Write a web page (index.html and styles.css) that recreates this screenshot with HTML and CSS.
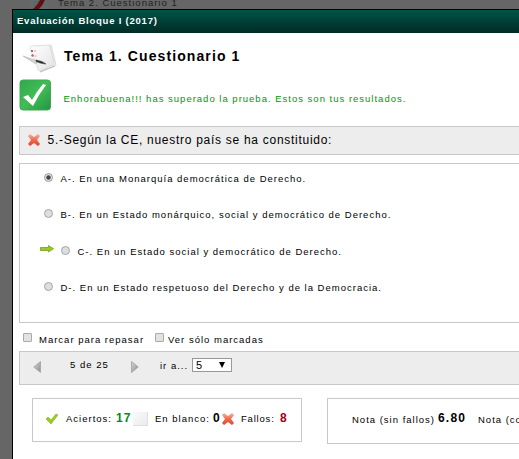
FILE: index.html
```html
<!DOCTYPE html>
<html lang="es">
<head>
<meta charset="utf-8">
<title>Evaluación Bloque I (2017)</title>
<link rel="stylesheet" href="styles.css">
</head>
<body>
<svg class="defs" width="0" height="0" aria-hidden="true">
  <defs>
    <linearGradient id="red" x2="0" y2="1"><stop stop-color="#f6b5a2"/><stop offset=".5" stop-color="#ee6a4d"/><stop offset="1" stop-color="#e5442b"/></linearGradient>
    <linearGradient id="green" x2="1" y2="1"><stop stop-color="#2fa84c"/><stop offset=".5" stop-color="#42bd55"/><stop offset="1" stop-color="#259343"/></linearGradient>
    <linearGradient id="grey" x2="1" y2="1"><stop stop-color="#d8d8d8"/><stop offset="1" stop-color="#8b8b8b"/></linearGradient>
    <linearGradient id="paper" x2="1" y2="1"><stop stop-color="#fff"/><stop offset="1" stop-color="#e4e4e4"/></linearGradient>
  </defs>
  <symbol id="cross" viewBox="0 0 14 14"><path d="M1 3 3 1l4 3 4-3 2 2-3 4 3 4-2 2-4-3-4 3-2-2 3-4z" fill="url(#red)"/></symbol>
</svg>
<div class="behind">
  <svg class="behind-icon" width="28" height="9" viewBox="0 0 28 9"><path d="M3 0h17v9H3z" fill="#626b6c"/><path d="M6 2h8M6 5h6" stroke="#566264"/><path d="M13 0h5q-2 5-6 9H6q4-3 7-9z" fill="#650f12"/></svg>
  <span>Tema 2. Cuestionario 1</span>
</div>
<main class="dialog">
  <header class="bar"><span>Evaluación Bloque I (2017)</span></header>
  <div class="title">
    <svg width="36" height="30" viewBox="0 0 36 30"><path d="m15 3 14-2 5 20-14 6z" fill="#f0f0f0" stroke="#ccc" stroke-width=".7"/><path d="M8 4q0-2 2-2l16-1q2 0 2 2l4 16q0 2-2 2l-12 6q-2 0-2-2z" fill="url(#paper)" stroke="#d4d4d4" stroke-width=".7"/><path d="m18 28 15-6" stroke="#bbb"/><path d="M9 7h2M9.500 12l2-1" fill="none" stroke="#c45c60" stroke-width="2"/><path d="M12 7.500l2-1M12.500 12h2" stroke="#dba3a3"/><path d="m1 12 15 5-2 3L4 14z" fill="#d5d5d5" stroke="#aaa" stroke-width=".5"/><path d="m14 16 6 1.500 4 2.500-5-.7-5-1.800z" fill="#333" stroke="#333" stroke-width=".5"/></svg>
    <h1>Tema 1. Cuestionario 1</h1>
  </div>
  <div class="message">
    <svg width="32" height="32" viewBox="0 0 32 32"><rect x="1" y="1" width="30.500" height="30" rx="3" fill="url(#green)" stroke="#44a65a"/><path d="m4 18 5-2 4 5q5-9 11-16l3 1Q20 15 14 27z" fill="#fff"/></svg>
    <p>Enhorabuena!!! has superado la prueba. Estos son tus resultados.</p>
  </div>
  <section class="question"><svg width="14" height="14"><use href="#cross"/></svg><h2>5.-Según la CE, nuestro país se ha constituido:</h2></section>
  <section class="answers">
    <label class="answer"><i class="radio on"></i><span>A-. En una Monarquía democrática de Derecho.</span></label>
    <label class="answer"><i class="radio"></i><span>B-. En un Estado monárquico, social y democrático de Derecho.</span></label>
    <label class="answer correct"><svg width="14" height="8" viewBox="0 0 14 8"><path d="M.5 2.500h8v-2l5 3.200-5 3.300V5.500h-8z" fill="#9bc824" stroke="#6fa31c" stroke-width=".8"/></svg><i class="radio"></i><span>C-. En un Estado social y democrático de Derecho.</span></label>
    <label class="answer"><i class="radio"></i><span>D-. En un Estado respetuoso del Derecho y de la Democracia.</span></label>
  </section>
  <div class="marks"><i class="check"></i><span class="review">Marcar para repasar</span><i class="check"></i><span class="marked">Ver sólo marcadas</span></div>
  <nav class="pager">
    <svg class="prev" width="9" height="14" viewBox="0 0 9 14"><path d="M7.500 1.500v11L.8 7z" fill="url(#grey)" stroke="#aaa"/></svg>
    <span class="count">5 de 25</span>
    <svg class="next" width="9" height="14" viewBox="0 0 9 14"><path d="M1.500 1.500v11L8.200 7z" fill="url(#grey)" stroke="#aaa"/></svg>
    <span class="goto">ir a...</span>
    <span class="select"><span>5</span><svg width="6" height="6" viewBox="0 0 6 6"><path d="M0 0h6L3 6z"/></svg></span>
  </nav>
  <div class="results">
    <section class="score">
      <svg class="tick" width="14" height="12" viewBox="0 0 14 12"><path d="m1 6 2-2 3 3 5-6 2 1-7 9z" fill="#9acb1f" stroke="#83b51c" stroke-width=".6"/></svg>
      <span class="hits">Aciertos:</span><b class="good">17</b>
      <i class="blank"></i><span class="blanks">En blanco:</span><b class="zero">0</b>
      <svg width="14" height="14"><use href="#cross"/></svg><span class="misses">Fallos:</span><b class="bad">8</b>
    </section>
    <section class="grade"><span class="plain">Nota (sin fallos)</span><b>6.80</b><span class="second">Nota (con fallos)</span></section>
  </div>
</main>
</body>
</html>
```
FILE: styles.css
```css
* { box-sizing: border-box; }
body { margin: 0; height: 459px; overflow: hidden; background: #666; color: #000; font: 9.5px/12px "Liberation Sans", Arial, sans-serif; letter-spacing: 1px; }
h1, h2, p { margin: 0; white-space: nowrap; }
span, b { white-space: nowrap; }
svg, i { display: block; flex: none; }
.defs { position: absolute; }
.behind { display: flex; height: 9px; padding-left: 27px; color: #222; }
.behind span { margin: -3px 0 0 3px; }
.dialog { position: absolute; left: 12px; top: 9px; right: 0; height: 450px; overflow: hidden; border: solid #000; border-width: 1px 0 0 1px; background: #fff; }
.bar { height: 23px; padding: 5px 4px; background: linear-gradient(#005448, #002b26); color: #fff; font-weight: bold; letter-spacing: .78px; }
.title { display: flex; height: 44px; padding: 11px 0 0 9px; }
.title h1 { margin: 4px 0 0 6px; font-size: 14px; line-height: 16px; letter-spacing: 1.1px; }
.message { display: flex; height: 49px; padding: 2px 0 0 6px; }
.message p { margin: 14px 0 0 12.5px; color: #090; }
.question, .answers, .pager { margin-left: 6px; border: 1px solid #c8c8c8; border-right: 0; }
.question { display: flex; align-items: center; height: 29px; padding-left: 7px; background: #ededed; }
.question svg { margin-top: -1px; }
.question h2 { margin: -2px 0 0 6.5px; font-size: 12px; line-height: 14px; font-weight: normal; letter-spacing: .72px; }
.answers { height: 160px; margin-top: 8px; padding-left: 24px; }
.answer { display: flex; align-items: flex-start; height: 36px; padding-top: 9px; }
.answer span { margin: 0 0 0 7.5px; }
.radio { width: 9px; height: 9px; border: 1px solid #a5a5a5; border-radius: 50%; background: #dedede; }
.on { border-color: #999; background: radial-gradient(circle, #444 0 1.8px, #e5e5e5 2.6px); }
.correct { height: 37px; margin-left: -4px; padding-top: 10px; }
.correct svg { margin: -1px 7px 0 0; }
.marks { display: flex; height: 28px; padding: 10px 0 0 10px; }
.check { width: 9px; height: 9px; border: 1px solid #aaa; border-radius: 1px; background: #e2e2e2; }
.marks span { margin-top: 1px; }
.marks .review { width: 116px; margin-left: 7px; }
.marks .marked { margin-left: 4px; }
.pager { display: flex; height: 34px; padding: 7px 0 0 13px; background: #ededed; }
.prev, .next { margin-top: 1px; }
.count { width: 60px; margin-left: 28px; }
.goto { width: 32px; margin-left: 21px; padding-top: 1px; }
.select { display: flex; align-items: center; justify-content: space-between; width: 40px; height: 14px; margin-top: -1px; padding: 0 6px 0 3px; border: 1px solid #999; background: #fff; font-size: 11px; }
.results { display: flex; align-items: flex-start; gap: 25px; margin: 13px 0 0 19px; }
.score { display: flex; flex: none; width: 270px; height: 44px; padding: 13px 0 0 12px; border: 1px solid #c8c8c8; }
.score b, .grade b { font-size: 12px; }
.score span { padding-top: 1px; }
.tick { margin-top: 1px; }
.hits { width: 50px; margin-left: 7px; }
.good { width: 17px; color: #008c14; }
.blank { width: 15px; height: 14px; border: solid #e0e0e0; border-width: 0 1px 1px 0; background: linear-gradient(135deg, #fafafa, #ececec); }
.blanks { width: 58px; margin-left: 7px; }
.zero { width: 8px; }
.misses { width: 39px; margin-left: 6px; letter-spacing: .8px; }
.bad { color: #a00010; }
.grade { display: flex; flex: 1; min-width: 0; height: 46px; padding: 14px 0 0 24px; border: 1px solid #c8c8c8; border-right: 0; overflow: hidden; }
.grade span { padding-top: 1px; }
.plain { flex: none; width: 86px; }
.grade b { flex: none; width: 40px; margin-top: -1px; letter-spacing: 1.2px; }
```
